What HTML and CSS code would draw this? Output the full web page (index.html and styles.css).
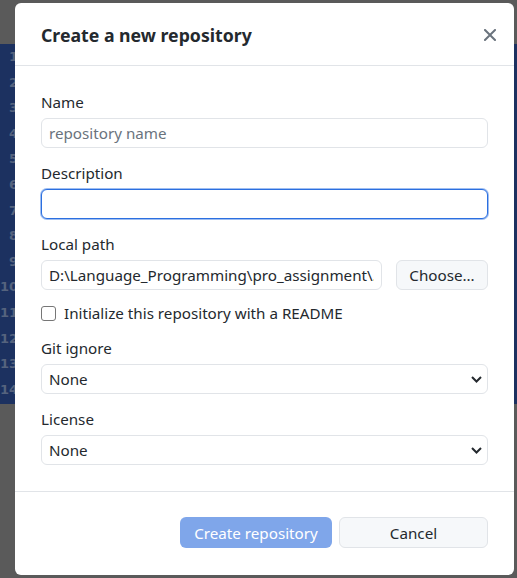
FILE: index.html
```html
<!DOCTYPE html>
<html>
<head>
<meta charset="utf-8">
<link rel="stylesheet" href="styles.css">
</head>
<body>
<div class="app">
  <div class="topbar"></div>
  <div class="editor">
    <div class="gutter">
      <div>1</div><div>2</div><div>3</div><div>4</div><div>5</div><div>6</div><div>7</div>
      <div>8</div><div>9</div><div>10</div><div>11</div><div>12</div><div>13</div><div>14</div>
    </div>
  </div>
  <div class="bottom"></div>
</div>

<div class="dialog">
  <div class="header">
    <h1 class="title">Create a new repository</h1>
    <button class="close" aria-label="Close">
      <svg width="12" height="12" viewBox="0 0 12 12"><path d="M1 1L11 11M11 1L1 11" stroke="#6a737d" stroke-width="2" stroke-linecap="square"/></svg>
    </button>
  </div>
  <div class="content">
    <div class="group">
      <label class="label">Name</label>
      <input class="field" type="text" placeholder="repository name">
    </div>
    <div class="group">
      <label class="label">Description</label>
      <input class="field focused" type="text">
    </div>
    <div class="group tight">
      <label class="label">Local path</label>
      <div class="row">
        <input class="field path" type="text" value="D:\Language_Programming\pro_assignment\.">
        <button class="btn choose">Choose...</button>
      </div>
    </div>
    <div class="check">
      <span class="box"></span>
      <span>Initialize this repository with a README</span>
    </div>
    <div class="group">
      <label class="label">Git ignore</label>
      <div class="select-wrap">
        <select class="field select"><option>None</option></select>
        <svg class="chev" width="11" height="7" viewBox="0 0 11 7"><path d="M1 1L5.5 5.5L10 1" fill="none" stroke="#24292e" stroke-width="2"/></svg>
      </div>
    </div>
    <div class="group last">
      <label class="label">License</label>
      <div class="select-wrap">
        <select class="field select"><option>None</option></select>
        <svg class="chev" width="11" height="7" viewBox="0 0 11 7"><path d="M1 1L5.5 5.5L10 1" fill="none" stroke="#24292e" stroke-width="2"/></svg>
      </div>
    </div>
  </div>
  <div class="footer">
    <button class="btn primary">Create repository</button>
    <button class="btn cancel">Cancel</button>
  </div>
</div>
</body>
</html>
```

FILE: styles.css
```css
html, body {
  margin: 0;
  padding: 0;
}
body {
  width: 517px;
  height: 578px;
  overflow: hidden;
  position: relative;
  font-family: "Noto Sans", sans-serif;
  font-size: 15.2px;
  color: #24292e;
}
.app {
  display: flex;
  flex-direction: column;
  height: 578px;
}
.topbar {
  height: 44px;
  background: #5a5a5a;
}
.editor {
  height: 360px;
  background: #1c3160;
}
.bottom {
  flex: 1;
  background: #5a5a5a;
}
.gutter {
  width: 18px;
  text-align: right;
  color: #55637e;
  font-family: "DejaVu Sans", sans-serif;
  font-weight: bold;
  font-size: 13px;
  line-height: 25.6px;
}
.dialog {
  position: absolute;
  left: 15px;
  top: 3px;
  width: 499px;
  height: 572px;
  background: #fff;
  border-radius: 6px;
  display: flex;
  flex-direction: column;
  box-sizing: border-box;
}
.header {
  height: 63px;
  box-sizing: border-box;
  border-bottom: 1px solid #e1e4e8;
  display: flex;
  align-items: center;
  justify-content: space-between;
  padding: 2px 18px 0 26px;
}
.title {
  margin: 0;
  font-size: 17.7px;
  font-weight: 700;
  color: #24292e;
}
.close {
  border: 0;
  background: none;
  padding: 0;
  width: 12px;
  height: 12px;
  display: flex;
}
.content {
  padding: 26px 26px 26px;
  display: flex;
  flex-direction: column;
  border-bottom: 1px solid #e1e4e8;
}
.group {
  display: flex;
  flex-direction: column;
  margin-bottom: 15px;
}
.group.tight,
.group.last {
  margin-bottom: 0;
}
.label {
  line-height: 20px;
  margin-bottom: 6px;
}
.field {
  height: 30px;
  box-sizing: border-box;
  border: 1px solid #e1e4e8;
  border-radius: 6px;
  padding: 0 7px;
  font-family: inherit;
  font-size: 15.2px;
  color: #24292e;
  background: #fff;
  outline: none;
  width: 100%;
}
.field::placeholder {
  color: #6a737d;
}
.field.focused {
  border: 1px solid #2b6fe0;
  box-shadow: 0 0 0 1px rgba(43, 111, 224, 0.45);
}
.row {
  display: flex;
  gap: 14px;
}
.path {
  flex: 1;
  width: auto;
  min-width: 0;
}
.btn {
  font-family: inherit;
  font-size: 15.2px;
  height: 31px;
  border-radius: 6px;
  box-sizing: border-box;
  cursor: pointer;
}
.choose {
  width: 92px;
  height: 30px;
  background: #f6f8fa;
  border: 1px solid #e1e4e8;
  color: #24292e;
  padding: 0;
}
.check {
  display: flex;
  align-items: center;
  gap: 8px;
  height: 20px;
  margin: 13px 0 15px;
}
.box {
  width: 15px;
  height: 15px;
  border: 1px solid #767676;
  border-radius: 3px;
  box-sizing: border-box;
  background: #fff;
}
.select-wrap {
  position: relative;
}
.select {
  appearance: none;
  -webkit-appearance: none;
  display: block;
}
.chev {
  position: absolute;
  right: 6px;
  top: 12px;
}
.footer {
  flex: 1;
  display: flex;
  justify-content: flex-end;
  align-items: flex-start;
  padding: 25px 26px 0;
  gap: 7px;
}
.primary {
  width: 152px;
  background: #7fa6ea;
  border: 0;
  color: #fff;
}
.cancel {
  width: 149px;
  background: #f6f8fa;
  border: 1px solid #e1e4e8;
  color: #24292e;
}
```
